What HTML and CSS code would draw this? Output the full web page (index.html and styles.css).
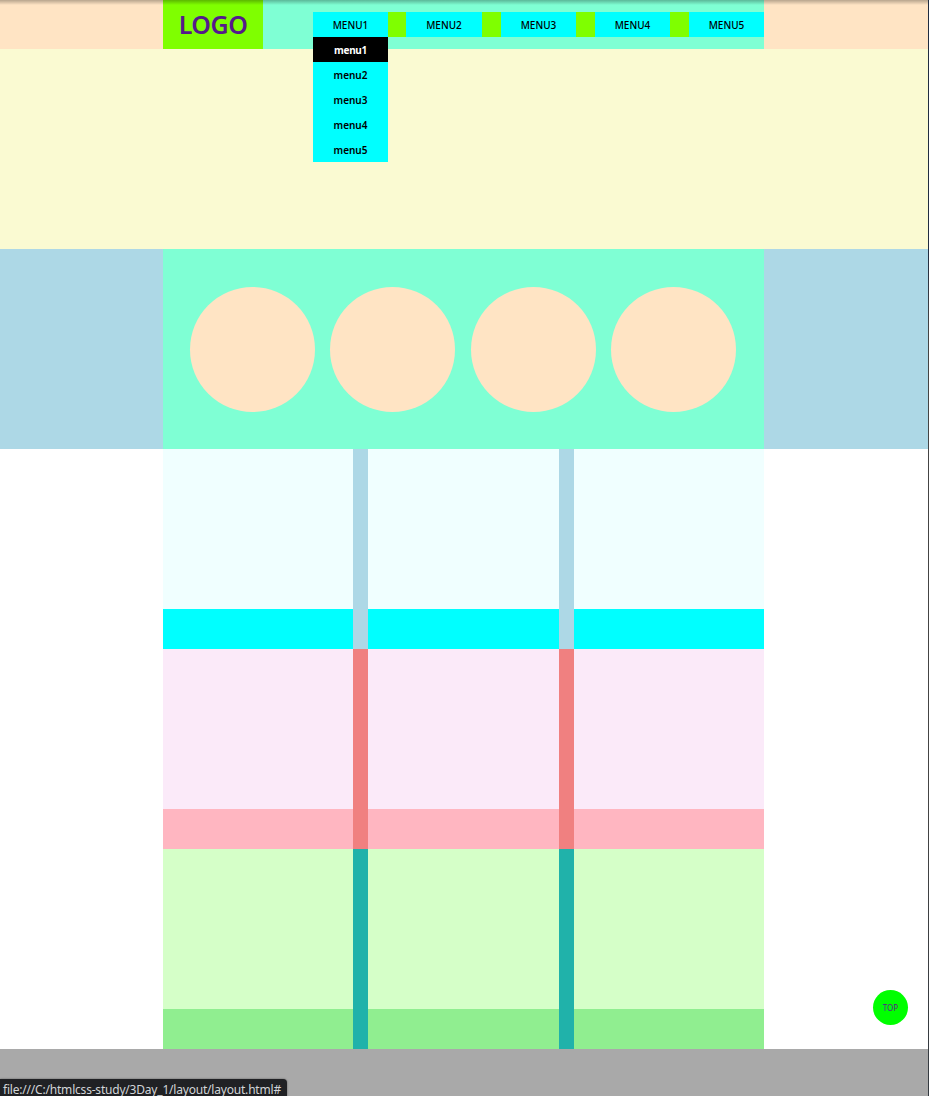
FILE: index.html
```html
<!DOCTYPE html>
<html lang="en">
<head>
<meta charset="utf-8">
<title>Layout</title>
<link rel="stylesheet" href="styles.css">
</head>
<body>
<div class="page">
  <header class="header">
    <div class="header-inner">
      <a class="logo" href="#"><span class="logo-text">LOGO</span></a>
      <nav class="menu">
        <div class="menu-item"><span>MENU1</span>
          <div class="submenu">
            <a class="active" href="#">menu1</a>
            <a href="#">menu2</a>
            <a href="#">menu3</a>
            <a href="#">menu4</a>
            <a href="#">menu5</a>
          </div>
        </div>
        <div class="menu-item menu-item-wide"><span>MENU2</span></div>
        <div class="menu-item"><span>MENU3</span></div>
        <div class="menu-item"><span>MENU4</span></div>
        <div class="menu-item"><span>MENU5</span></div>
      </nav>
    </div>
  </header>
  <section class="banner"></section>
  <section class="circles">
    <div class="circles-inner">
      <div class="circle"></div>
      <div class="circle"></div>
      <div class="circle"></div>
      <div class="circle"></div>
    </div>
  </section>
  <main class="content">
    <section class="row row-blue"><div class="card"></div><div class="card"></div><div class="card"></div></section>
    <section class="row row-pink"><div class="card"></div><div class="card"></div><div class="card"></div></section>
    <section class="row row-green"><div class="card"></div><div class="card"></div><div class="card"></div></section>
  </main>
  <footer class="footer"></footer>
</div>
<div class="top-shadow"></div>
<div class="window-edge"></div>
<a class="top-button" href="#"><span class="top-text">TOP</span></a>
<div class="status"><span class="status-text">file:///C:/htmlcss-study/3Day_1/layout/layout.html#</span></div>
</body>
</html>
```
FILE: styles.css
```css
* { box-sizing: border-box; }
body {
  margin: 0;
  height: 1096px;
  overflow: hidden;
  background: #fff;
  font-family: "Noto Sans", "Open Sans", sans-serif;
}
a { text-decoration: none; }
.page { width: 928px; }
.header { height: 49px; background: bisque; }
.header-inner {
  display: flex;
  justify-content: space-between;
  align-items: center;
  width: 601px;
  height: 49px;
  margin-left: 163px;
  background: aquamarine;
}
.logo {
  display: flex;
  align-items: center;
  justify-content: center;
  width: 100px;
  height: 49px;
  padding-bottom: 2px;
  background: chartreuse;
  color: #551a8b;
  font-size: 25px;
  font-weight: 600;
  letter-spacing: -0.5px;
}
.menu {
  display: grid;
  grid-template-columns: 75px 75px 75px 75px 75px;
  column-gap: 19px;
  width: 451px;
  height: 25px;
  background: chartreuse;
  font-size: 10px;
  font-weight: 500;
  line-height: 27px;
  text-align: center;
}
.menu-item { position: relative; height: 25px; background: aqua; color: #000; }
.menu-item-wide { margin-left: -1px; }
.submenu {
  position: absolute;
  top: 25px;
  left: 0;
  z-index: 2;
  width: 75px;
  background: aqua;
  font-weight: 600;
}
.submenu a { display: block; height: 25px; color: #000; }
.submenu .active { background: #000; color: #fff; font-weight: 700; letter-spacing: -0.3px; }
.banner { height: 200px; background: lightgoldenrodyellow; }
.circles { height: 200px; background: lightblue; }
.circles-inner {
  display: flex;
  justify-content: space-between;
  width: 601px;
  height: 200px;
  margin-left: 163px;
  padding: 38px 28px 0 27px;
  background: aquamarine;
}
.circle { width: 125px; height: 125px; border-radius: 50%; background: bisque; }
.content { width: 601px; margin-left: 163px; }
.row { display: grid; grid-template-columns: 190px 191px 190px; column-gap: 15px; height: 200px; }
.card { border-bottom: 40px solid; }
.row-blue { background: lightblue; }
.row-blue .card { background: azure; border-color: aqua; }
.row-pink { background: lightcoral; }
.row-pink .card { background: #fbeaf9; border-color: lightpink; }
.row-green { background: lightseagreen; }
.row-green .card { background: #d5ffc8; border-color: lightgreen; }
.footer { height: 47px; background: darkgray; }
.top-shadow {
  position: absolute;
  top: 0;
  left: 0;
  width: 928px;
  height: 5px;
  background: linear-gradient(rgba(0, 0, 0, 0.28), rgba(0, 0, 0, 0));
}
.window-edge {
  position: absolute;
  top: 0;
  left: 928px;
  width: 1px;
  height: 1096px;
  background: linear-gradient(#202c40 0 250px, #444 330px 800px, #343a40);
}
.top-button {
  position: absolute;
  top: 990px;
  left: 873px;
  display: flex;
  align-items: center;
  justify-content: center;
  width: 35px;
  height: 35px;
  border-radius: 50%;
  background: lime;
  color: #551a8b;
  font-size: 8px;
}
.status {
  position: absolute;
  left: 0;
  bottom: 0;
  width: 287px;
  height: 17px;
  padding-left: 3px;
  border-radius: 0 4px 0 0;
  background: #202124;
  box-shadow: 0 0 2px rgba(0, 0, 0, 0.5);
  color: #d2d5d8;
  font-size: 12px;
  line-height: 21px;
  letter-spacing: -0.2px;
  white-space: nowrap;
}
```
